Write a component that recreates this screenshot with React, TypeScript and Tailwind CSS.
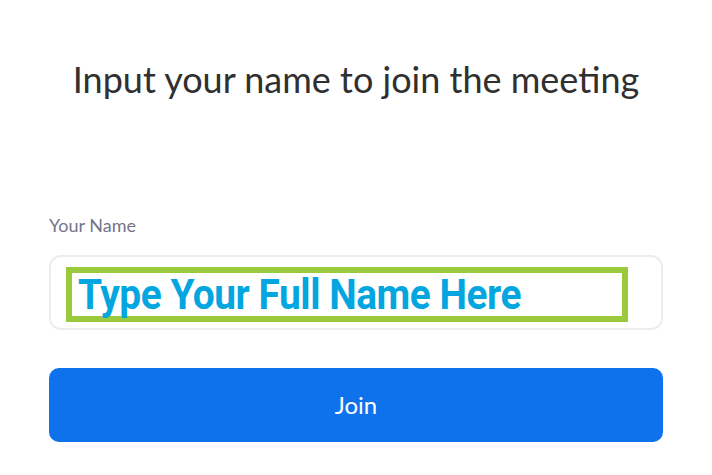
export default function App() {
  return (
    <div className="min-h-screen bg-white px-[49px] font-['Lato','Liberation_Sans',sans-serif]">
      <h1 className="pt-[58px] text-center text-[36px] leading-[42px] font-normal text-[#303030]">
        Input your name to join the meeting
      </h1>

      <div className="mt-[114px] text-[18px] leading-[22px] text-[#747487]">Your Name</div>

      <div className="mt-[19px] h-[75px] rounded-[12px] border-2 border-[#ededed] pt-[10px] pl-[15px] pr-[33px]">
        <div className="flex h-[55px] items-center border-[6px] border-[#9aca3c] bg-white pl-[6px]">
          <span className="inline-block origin-left scale-x-[0.926] whitespace-nowrap font-['Roboto',sans-serif] text-[42px] leading-none font-bold tracking-[-0.5px] text-[#04a6df]">
            Type Your Full Name Here
          </span>
        </div>
      </div>

      <button className="mt-[38px] flex h-[74px] w-full items-center justify-center rounded-[10px] bg-[#0e72ed] text-[24px] text-white">
        Join
      </button>
    </div>
  );
}
